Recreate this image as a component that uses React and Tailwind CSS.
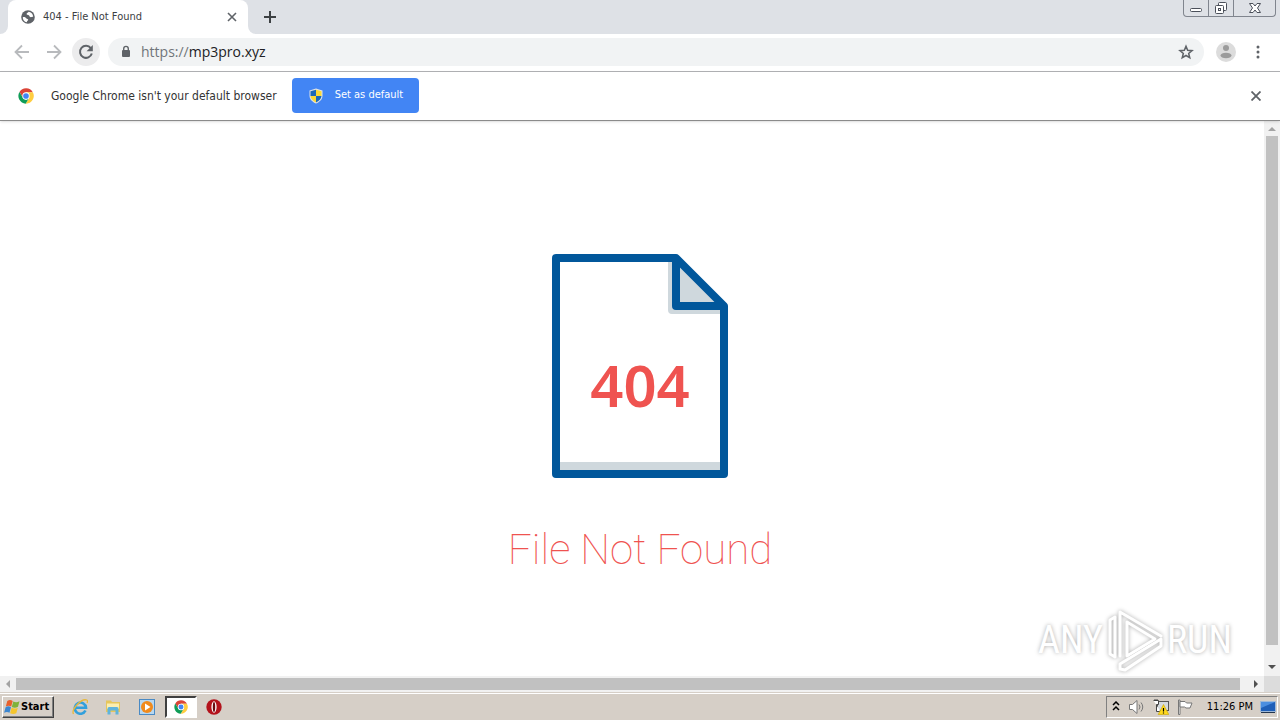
const ChromeLogo = ({ className }) => (
  <svg viewBox="0 0 48 48" className={className} aria-hidden="true">
    <path d="M4.500 12A23 23 0 0 1 44.400 13H24L14 28z" fill="#db4437" />
    <path d="M44.400 13A23 23 0 0 1 23 47L34 29 24 13z" fill="#ffcd40" />
    <path d="M23 47A23 23 0 0 1 4.500 12L14.500 29.500 24 35l9.500-5.500z" fill="#0f9d58" />
    <circle cx="24" cy="24" r="11" fill="#fff" />
    <circle cx="24" cy="24" r="8.500" fill="#4285f4" />
  </svg>
);

const Globe = () => (
  <svg viewBox="0 0 16 16" className="h-4 w-4 shrink-0" aria-hidden="true">
    <circle cx="8" cy="8" r="6.800" fill="#5f6368" />
    <path d="M2.800 8.200c1.500-.3 2.700.2 3.400 1 .8.900 2 .5 2 1.500 0 1-1.200 1-1.400 2.500C4.300 12.800 2.600 10.600 2.800 8.200z" fill="#fff" />
    <path d="M8.500 2.800c-.3 1.200-1.900 1-1.900 2.200 0 1 1.300.8 2.200 1.200.9.500.5 1.600 1.500 1.900 1 .3 1.900-.6 2.900-.3C13 5 11 3 8.500 2.800z" fill="#fff" />
  </svg>
);

const TabStrip = () => (
  <header className="flex h-[34px] shrink-0 items-end bg-[#dee1e6]">
    <div className="h-full w-2 bg-white">
      <div className="h-full w-2 rounded-br-lg bg-[#dee1e6]" />
    </div>
    <div className="flex h-full w-60 items-center rounded-t-lg bg-white pl-3 pr-2">
      <Globe />
      <span className="ml-[7px] flex-1 whitespace-nowrap text-[11px] leading-4 text-[#3c4043]">404 - File Not Found</span>
      <button type="button" aria-label="Close tab" className="flex h-4 w-4 items-center justify-center">
        <svg viewBox="0 0 10 10" className="h-2.5 w-2.5" stroke="#5f6368" strokeWidth="1.600">
          <path d="M1 1l8 8M9 1l-8 8" />
        </svg>
      </button>
    </div>
    <div className="h-full w-2 bg-white">
      <div className="h-full w-2 rounded-bl-lg bg-[#dee1e6]" />
    </div>
    <button type="button" aria-label="New tab" className="flex h-full w-7 items-center justify-center">
      <svg viewBox="0 0 12 12" className="h-3 w-3" stroke="#3c4043" strokeWidth="2">
        <path d="M6 0v12M0 6h12" />
      </svg>
    </button>
    <div className="ml-auto mr-1 flex h-[17px] self-start rounded-b border border-t-0 border-[#80858e]">
      <button type="button" aria-label="Minimize" className="flex w-[25px] items-center justify-center border-r border-[#80858e]">
        <svg viewBox="0 0 14 14" className="h-3.5 w-3.5" fill="#fff" stroke="#4b505a">
          <rect x="1.500" y="7.500" width="11" height="3" rx="1" />
        </svg>
      </button>
      <button type="button" aria-label="Restore" className="flex w-[25px] items-center justify-center border-r border-[#80858e]">
        <svg viewBox="0 0 14 14" className="h-3.5 w-3.5" fill="#fff" stroke="#4b505a">
          <rect x="4.500" y="1.500" width="8" height="8" rx="1" />
          <rect x="1.500" y="4.500" width="8" height="8" rx="1" />
          <rect x="4.500" y="7.500" width="2" height="2" />
        </svg>
      </button>
      <button type="button" aria-label="Close" className="flex w-[41px] items-center justify-center">
        <svg viewBox="0 0 14 14" className="h-3.5 w-3.5" fill="#fff" stroke="#4b505a">
          <path d="M1.500 2.500h3.500l2 2.500 2-2.500h3.500L9.500 7l3 4.500H9L7 9l-2 2.500H1.500L4.500 7z" />
        </svg>
      </button>
    </div>
  </header>
);

const Toolbar = () => (
  <nav className="flex h-[38px] shrink-0 items-center border-b border-[#b1b2b5] bg-white pb-px pl-2.5 pr-3.5">
    <button type="button" aria-label="Back" className="flex h-6 w-6 items-center justify-center">
      <svg viewBox="0 0 16 16" className="h-4 w-4" fill="none" stroke="#b8babd" strokeWidth="1.800">
        <path d="M15 8H2M8 1.500L1.500 8 8 14.500" />
      </svg>
    </button>
    <button type="button" aria-label="Forward" className="ml-2 flex h-6 w-6 items-center justify-center">
      <svg viewBox="0 0 16 16" className="h-4 w-4" fill="none" stroke="#b8babd" strokeWidth="1.800">
        <path d="M1 8h13M8 1.500L14.500 8 8 14.500" />
      </svg>
    </button>
    <button type="button" aria-label="Reload" className="ml-1.5 flex h-7 w-7 items-center justify-center rounded-full bg-[#ececed]">
      <svg viewBox="0 0 16 16" className="h-4 w-4" fill="none" stroke="#5f6368" strokeWidth="2">
        <path d="M12.800 4.200A6 6 0 1 0 13.800 9.500" />
        <path d="M14.800 1v6.200H8.600z" fill="#5f6368" stroke="none" />
      </svg>
    </button>
    <div className="ml-2 flex h-7 flex-1 items-center rounded-full bg-[#f1f3f4] pl-3 pr-2.5">
      <svg viewBox="0 0 12 14" className="h-3.5 w-3" aria-hidden="true">
        <rect x="2" y="5" width="8" height="7" rx="1" fill="#5f6368" />
        <path d="M3.700 5.500V3.700a2.300 2.300 0 0 1 4.600 0v1.800" fill="none" stroke="#5f6368" strokeWidth="1.400" />
      </svg>
      <a href="https://mp3pro.xyz" className="ml-[9px] flex-1 font-['Open_Sans','Noto_Sans',sans-serif] text-sm text-[#202124]">
        <span className="text-[#70757a]">https://</span>mp3pro.xyz
      </a>
      <button type="button" aria-label="Bookmark this tab">
        <svg viewBox="0 0 24 24" className="h-4 w-4" fill="none" stroke="#5f6368" strokeWidth="2.300">
          <path d="M12 3.500l2.500 6 6.500.5-5 4.200 1.600 6.300L12 17.200 6.400 20.500 8 14.200 3 10l6.500-.5z" />
        </svg>
      </button>
    </div>
    <button type="button" aria-label="Profile" className="ml-3 flex">
      <svg viewBox="0 0 20 20" className="h-5 w-5">
        <circle cx="10" cy="10" r="10" fill="#dcdcdc" />
        <circle cx="10" cy="6" r="3" fill="#9b9b9b" />
        <ellipse cx="10" cy="13.500" rx="5.500" ry="2.800" fill="#9b9b9b" />
      </svg>
    </button>
    <button type="button" aria-label="Menu" className="ml-3.5 flex">
      <svg viewBox="0 0 16 16" className="h-4 w-4" fill="#5f6368">
        <circle cx="8" cy="3" r="1.500" />
        <circle cx="8" cy="8" r="1.500" />
        <circle cx="8" cy="13" r="1.500" />
      </svg>
    </button>
  </nav>
);

const Shield = () => (
  <svg viewBox="0 0 16 16" className="h-4 w-4" aria-hidden="true">
    <path d="M8 .5L14.500 2.500v5c0 4-3 6.500-6.500 8-3.500-1.500-6.500-4-6.500-8v-5z" fill="#dfe3e6" />
    <path d="M8 1.800v6.200H2.500V3.300z" fill="#1c69b8" />
    <path d="M8 1.800l5.500 1.500V8H8z" fill="#fbd936" />
    <path d="M2.500 8H8v6.400C5 13 2.700 11 2.500 8z" fill="#fbd936" />
    <path d="M13.500 8H8v6.400c3-1.400 5.300-3.400 5.500-6.400z" fill="#1c69b8" />
  </svg>
);

const InfoBar = () => (
  <div className="z-10 flex h-[49px] shrink-0 items-center border-b border-[#8b8b8b] bg-white pb-px pl-[18px] pr-4 shadow">
    <ChromeLogo className="h-4 w-4" />
    <span className="ml-[17px] whitespace-nowrap text-xs text-[#333]">Google Chrome isn't your default browser</span>
    <button type="button" className="ml-[15px] flex h-[35px] w-[127px] items-center rounded bg-[#4285f4] pl-4 text-[11px] text-white">
      <Shield />
      <span className="ml-[11px] whitespace-nowrap">Set as default</span>
    </button>
    <button type="button" aria-label="Dismiss" className="ml-auto flex h-4 w-4 items-center justify-center">
      <svg viewBox="0 0 10 10" className="h-2.5 w-2.5" stroke="#5f6368" strokeWidth="1.800">
        <path d="M.5.5l9 9M9.500.5l-9 9" />
      </svg>
    </button>
  </div>
);

const Watermark = () => (
  <div className="absolute bottom-1 right-8 flex items-center font-['Roboto_Condensed',Roboto,sans-serif] text-[38px] leading-none text-white [text-shadow:0_0_4px_#aaa]">
    <span>ANY</span>
    <svg viewBox="0 0 60 64" className="mx-0.5 h-16 w-[60px] drop-shadow-[0_0_2px_#aaa]" fill="none" stroke="#fff" strokeWidth="3" strokeLinejoin="round" strokeLinecap="round" aria-hidden="true">
      <path d="M10 9L5 12V46l5 3z" />
      <path d="M15 48V4L56 28" />
      <path d="M22 14V48L50 31z" />
      <path d="M56 31L15 56v5l5 1L56 38z" />
    </svg>
    <span>RUN</span>
  </div>
);

const Page = () => (
  <main className="relative flex-1 overflow-hidden bg-white">
    <div className="flex w-screen flex-col items-center pt-[133px]">
      <svg viewBox="0 0 176 224" className="h-56 w-44" role="img" aria-label="404">
        <path d="M116 8v48q0 4 4 4h52V52H128V8z" fill="#cfd8dd" />
        <path d="M124 8v44h44z" fill="#cfd8dd" />
        <path d="M8 208h160v8H8z" fill="#cfd8dd" />
        <path d="M4 4H124L172 52V220H4zM124 4V52H172" fill="none" stroke="#01579b" strokeWidth="8" strokeLinejoin="round" />
        <text x="88" y="153" textAnchor="middle" fill="#ef5350" className="font-['Noto_Sans','Open_Sans',sans-serif] text-[58px] font-semibold">404</text>
      </svg>
      <h1 className="mt-[46px] font-[Roboto,sans-serif] text-[42px] font-thin leading-[52px] text-[#ef5350]">File Not Found</h1>
    </div>
    <Watermark />
  </main>
);

const VerticalScroll = () => (
  <div className="flex w-4 shrink-0 flex-col items-center bg-[#f1f1f1]">
    <svg viewBox="0 0 16 15" className="h-[15px] w-4" aria-hidden="true">
      <path d="M4 10h8L8 6z" fill="#a3a3a3" />
    </svg>
    <div className="mb-[15px] w-3 flex-1 bg-[#c1c1c1]" />
    <svg viewBox="0 0 16 16" className="h-4 w-4" aria-hidden="true">
      <path d="M4 5h8L8 9z" fill="#505050" />
    </svg>
  </div>
);

const HorizontalScroll = () => (
  <div className="flex h-4 shrink-0 items-center bg-[#f1f1f1]">
    <svg viewBox="0 0 16 16" className="h-4 w-4" aria-hidden="true">
      <path d="M10 4v8L6 8z" fill="#a3a3a3" />
    </svg>
    <div className="mr-2 h-3 flex-1 bg-[#c1c1c1]" />
    <svg viewBox="0 0 16 16" className="h-4 w-4" aria-hidden="true">
      <path d="M6 4v8l4-4z" fill="#505050" />
    </svg>
    <div className="h-4 w-4 bg-[#dcdcdc]" />
  </div>
);

const WindowsFlag = () => (
  <svg viewBox="0 0 16 16" className="h-4 w-4" aria-hidden="true">
    <path d="M3.300 2c2-1.500 3.700-1.200 5.400 0L7.200 7.500c-1.700-1-3.400-1-5.400 0z" fill="#e8602c" />
    <path d="M9.300 2.500c2 1 4 1 6.200-.3L14 7.800c-2.200 1.200-4 1.200-6.200.2z" fill="#7fb23a" />
    <path d="M1.600 8.200c2-1.200 3.700-1 5.400 0l-1.500 5.600c-1.700-1-3.400-1-5.400 0z" fill="#3c86d0" />
    <path d="M7.600 8.800c2 1 4 1 6.200-.1l-1.500 5.600c-2.200 1.100-4 1-6.200 0z" fill="#f5c52c" />
  </svg>
);

const Explorer = () => (
  <svg viewBox="0 0 16 16" className="h-4 w-4" fill="none">
    <path d="M13.500 11.500A5.600 5.600 0 1 1 14 8.700H4" stroke="#32a0dc" strokeWidth="2.600" />
    <path d="M1.500 15C-1 11 9-1 14.800 1c1 .5.800 2 .2 3" stroke="#e8b83a" strokeWidth="1.300" />
  </svg>
);

const Folder = () => (
  <svg viewBox="0 0 16 16" className="h-4 w-4">
    <path d="M1 1.500h5l1 1.500h8V13H1z" fill="#e6c65c" />
    <path d="M2 4.500h12V10H2z" fill="#fbeeb0" />
    <path d="M2.500 15.500V9.500Q2.500 8 4 8h8q1.500 0 1.500 1.500v6h-3V11.500h-5v4z" fill="#5fb4dc" />
  </svg>
);

const MediaPlayer = () => (
  <svg viewBox="0 0 16 16" className="h-4 w-4">
    <rect x=".5" y=".5" width="15" height="15" fill="#b7d7f0" stroke="#4a8ac4" />
    <circle cx="8" cy="8" r="6" fill="#f08a1c" />
    <path d="M6 4.500v7L11.500 8z" fill="#fff" />
  </svg>
);

const Opera = () => (
  <svg viewBox="0 0 16 16" className="h-4 w-4">
    <circle cx="8" cy="8" r="7.700" fill="#b3121b" />
    <ellipse cx="8" cy="8" rx="2.600" ry="5.800" fill="#fff" />
    <ellipse cx="8" cy="8" rx="1.200" ry="5" fill="#6b0a10" />
  </svg>
);

const Tray = () => (
  <div className="ml-auto flex h-[22px] items-center border border-b-white border-l-[#808080] border-r-white border-t-[#808080] pl-1 pr-px">
    <button type="button" aria-label="Show hidden icons" className="mr-2 flex">
      <svg viewBox="0 0 10 12" className="h-3 w-2.5" fill="none" stroke="#000" strokeWidth="1.500">
        <path d="M2 4l3-3 3 3M2 9l3-3 3 3" />
      </svg>
    </button>
    <div className="flex gap-2">
      <svg viewBox="0 0 16 16" className="h-4 w-4" fill="#fff" stroke="#777">
        <path d="M.5 5.500h3L8 1.500v13l-4.500-4h-3z" />
        <path d="M10 5.500q2 2.500 0 5M12 3.500q3.500 4.500 0 9" fill="none" />
      </svg>
      <svg viewBox="0 0 16 16" className="h-4 w-4">
        <rect x="4.500" y="2.500" width="11" height="9" fill="#d5dade" stroke="#555" />
        <path d="M.5 1.500h5v4h-2V12.500h4" fill="#fff" stroke="#444" />
        <path d="M2 0v2M4 0v2" stroke="#444" />
        <path d="M10.500 5.500l5.300 10h-10.600z" fill="#ffd91c" stroke="#c8a400" strokeWidth=".6" />
        <path d="M10.500 9v3.500M10.500 13.500v1" stroke="#000" strokeWidth="1.200" />
      </svg>
      <svg viewBox="0 0 16 16" className="h-4 w-4" fill="#fff" stroke="#777">
        <path d="M1.500 1v14.500h1.500V1z" />
        <path d="M3 2.500h5l1.500 1.500H15L13 9H9L7.500 8H3z" />
      </svg>
    </div>
    <time className="ml-[14px] whitespace-nowrap text-[11px] text-black">11:26 PM</time>
    <button type="button" aria-label="Show desktop" className="ml-[7px] flex">
      <svg viewBox="0 0 16 16" className="h-4 w-4">
        <path d="M.5 2.500h15v10H.5z" fill="#1f5fb8" stroke="#9db8d8" />
        <path d="M1 3h14L1 9z" fill="#4b8ee0" />
        <path d="M1 13.500h14" stroke="#23364f" />
      </svg>
    </button>
  </div>
);

const Taskbar = () => (
  <footer className="flex h-7 shrink-0 items-center border-t border-[#d6cfc7] bg-[#d6cfc7] px-0.5 pt-px shadow-[inset_0_1px_0_#fff]">
    <button type="button" className="flex h-[22px] w-[52px] items-center border border-b-[#404040] border-l-white border-r-[#404040] border-t-white pl-px text-[11px] font-bold text-black shadow-[inset_-1px_-1px_0_#808080]">
      <WindowsFlag />
      <span className="ml-px">Start</span>
    </button>
    <button type="button" aria-label="Internet Explorer" className="ml-[18px] flex">
      <Explorer />
    </button>
    <button type="button" aria-label="Windows Explorer" className="ml-[17px] flex">
      <Folder />
    </button>
    <button type="button" aria-label="Media Player" className="ml-[18px] flex">
      <MediaPlayer />
    </button>
    <button type="button" aria-label="Google Chrome" className="ml-2.5 flex h-[22px] w-8 items-center justify-center border-2 border-b-white border-l-[#404040] border-r-white border-t-[#404040] bg-white">
      <ChromeLogo className="h-3.5 w-3.5" />
    </button>
    <button type="button" aria-label="Opera" className="ml-[9px] flex">
      <Opera />
    </button>
    <Tray />
  </footer>
);

const App = () => {
  return (
    <div className="flex h-screen flex-col font-['DejaVu_Sans_Condensed','DejaVu_Sans',sans-serif]">
      <TabStrip />
      <Toolbar />
      <InfoBar />
      <div className="flex flex-1">
        <Page />
        <VerticalScroll />
      </div>
      <HorizontalScroll />
      <Taskbar />
    </div>
  );
};

export default App;
